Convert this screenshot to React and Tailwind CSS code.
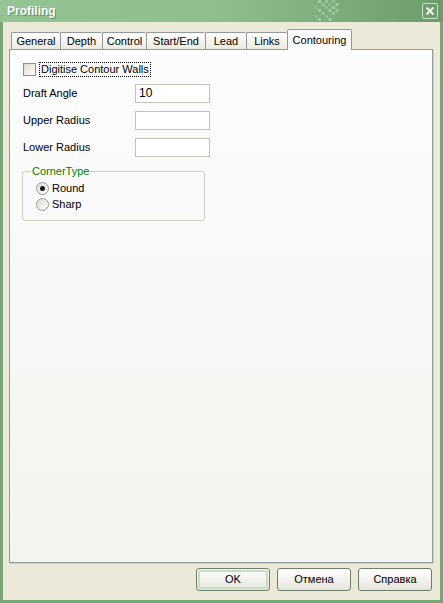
import React from 'react'

const tabs = [
  { label: 'General', w: 'w-[49px]' },
  { label: 'Depth', w: 'w-[42px]' },
  { label: 'Control', w: 'w-[44px]' },
  { label: 'Start/End', w: 'w-[59px]' },
  { label: 'Lead', w: 'w-[41px]' },
  { label: 'Links', w: 'w-[41px]' },
]

function TitleDots() {
  const cells = [
    [2, 0], [4, 0], [6, 0], [3, 1], [5, 1], [7, 1], [1, 2], [4, 2], [6, 2],
    [2, 3], [5, 3], [7, 3], [3, 4], [6, 4], [1, 5], [4, 5], [2, 6], [5, 6],
  ]
  return (
    <svg width="30" height="22" viewBox="0 0 30 22" className="shrink-0">
      {cells.map(([x, y], i) => (
        <rect key={i} x={x * 3.5} y={y * 3} width="3" height="3" fill="#b8dcb8" opacity={0.35 + ((x + y) % 3) * 0.15} />
      ))}
    </svg>
  )
}

function Field({ label, value }) {
  return (
    <div className="flex items-center h-[19px] ml-px">
      <span className="w-[112px]">{label}</span>
      <div className="w-[75px] h-[19px] border border-[#c3c2b4] bg-white flex items-center pl-[3px] text-[12px]">
        {value}
      </div>
    </div>
  )
}

function Radio({ label, checked }) {
  return (
    <div className="flex items-center h-[13px] gap-[3px]">
      <span className="w-[13px] h-[13px] rounded-full border border-[#9a9a92] bg-gradient-to-br from-[#dcdcd4] to-white flex items-center justify-center">
        {checked && <span className="w-[5px] h-[5px] rounded-full bg-[#1a1a1a]" />}
      </span>
      <span>{label}</span>
    </div>
  )
}

function Button({ label, primary }) {
  return (
    <div className="w-[74px] h-[23px] rounded-[3px] border border-[#6f7d6f] bg-gradient-to-b from-white to-[#e6e5dc] p-px">
      <div className={'w-full h-full rounded-[2px] flex items-center justify-center ' + (primary ? 'border-2 border-[#c4dfc0]' : '')}>
        {label}
      </div>
    </div>
  )
}

export default function App() {
  return (
    <div className="w-[443px] h-[603px] flex flex-col bg-[#ece9d8] text-black text-[11px] leading-[13px] font-['Liberation_Sans',Arial,sans-serif]">
      {/* title bar */}
      <div className="h-[22px] flex items-center bg-gradient-to-r from-[#94c494] via-[#8ebe8e] to-[#6c9c6c] pl-[7px] pr-[5px]">
        <span className="text-white font-bold text-[12px] [text-shadow:1px_1px_0_#5f8f5f]">Profiling</span>
        <div className="flex-1" />
        <TitleDots />
        <div className="w-[81px]" />
        <div className="w-[16px] h-[16px] border border-[#c8e0c8] rounded-[2px] flex items-center justify-center">
          <svg width="10" height="10" viewBox="0 0 10 10">
            <path d="M1.5 1.5 L8.5 8.5 M8.5 1.5 L1.5 8.5" stroke="#eef7ee" strokeWidth="2" />
          </svg>
        </div>
      </div>

      {/* body */}
      <div className="flex-1 flex flex-col border-l-[3px] border-r-[3px] border-b-[3px] border-[#76a676]">
        {/* tabs */}
        <div className="flex items-end h-[20px] mt-[7px] ml-[8px]">
          {tabs.map(t => (
            <div key={t.label} className={t.w + ' h-[17px] border-t border-l border-[#919b9c] bg-gradient-to-b from-white to-[#eceae0] flex items-center justify-center rounded-t-[2px]'}>
              {t.label}
            </div>
          ))}
          <div className="relative z-10 w-[65px] h-[21px] -mb-px border-t border-x border-[#919b9c] bg-[#fcfcfe] flex items-start justify-center pt-[4px] rounded-t-[2px]">
            Contouring
          </div>
        </div>

        {/* panel */}
        <div className="ml-[6px] w-[424px] h-[514px] border border-[#919b9c] bg-gradient-to-b from-[#fcfcfe] to-[#f4f3ee] shadow-[1px_1px_0_#d3d0bd] pl-[12px] pt-[12px] flex flex-col">
          <div className="flex items-center h-[15px] ml-px">
            <span className="w-[13px] h-[13px] border border-[#8f9090] bg-gradient-to-br from-[#dedbd0] to-white" />
            <span className="ml-[3px] border border-dotted border-black px-px">Digitise Contour Walls</span>
          </div>
          <div className="flex flex-col gap-[8px] mt-[7px]">
            <Field label="Draft Angle" value="10" />
            <Field label="Upper Radius" />
            <Field label="Lower Radius" />
          </div>
          <fieldset className="mt-[8px] w-[183px] h-[56px] border border-[#d0d0bf] rounded-[3px] px-0 pt-[4px]">
            <legend className="ml-[8px] px-[1px] text-[#007f00]">CornerType</legend>
            <div className="ml-[13px] flex flex-col gap-[3px]">
              <Radio label="Round" checked />
              <Radio label="Sharp" />
            </div>
          </fieldset>
        </div>

        {/* buttons */}
        <div className="flex justify-end gap-[7px] mt-[5px] mr-[8px]">
          <Button label="OK" primary />
          <Button label="Отмена" />
          <Button label="Справка" />
        </div>
      </div>
    </div>
  )
}
